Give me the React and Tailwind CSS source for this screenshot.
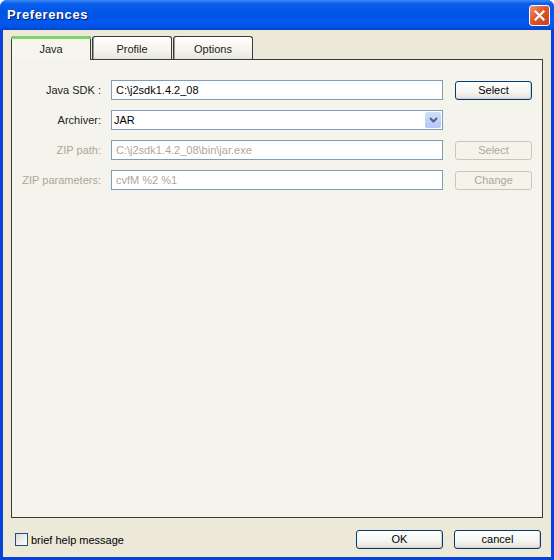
import { useState } from 'react';

const FONT = { fontFamily: '"Liberation Sans", Arial, sans-serif' };

const XpButton = ({ children, disabled, className = '' }) => (
    <button
        disabled={disabled}
        className={`h-[19px] rounded-[3px] border text-[11px] leading-none ${
            disabled
                ? 'border-[#c9c7ba] bg-[#f5f4ea] text-[#aca899]'
                : 'border-[#003c74] bg-[linear-gradient(#ffffff,#f4f4f0_60%,#e3e1d8)] text-black shadow-[inset_-1px_-1px_0_#d6d0c5]'
        } ${className}`}
    >
        {children}
    </button>
);

const Tab = ({ label, active }) => (
    <div
        className={`relative flex h-[23px] w-[80px] items-center justify-center rounded-t-[3px] border border-b-0 text-[11px] ${
            active
                ? 'z-10 -mb-px h-[24px] border-[#3a3a3a] bg-[#f6f5ee] text-[#222]'
                : 'border-[#3a3a3a] bg-[linear-gradient(#ffffff,#f2f1ea_70%,#e6e5dc)] text-[#222] shadow-[inset_1px_0_0_#9a9a9a]'
        }`}
    >
        {active && <div className="absolute -top-px -left-px -right-px h-[3px] rounded-t-[3px] bg-[#7ed36b]" />}
        <span className={active ? 'pt-[1px]' : 'pt-[2px]'}>{label}</span>
    </div>
);

const Field = ({ value, disabled }) => (
    <div
        className={`flex h-[20px] w-[332px] items-center border border-[#7f9db9] bg-white pl-[4px] text-[11px] ${
            disabled ? 'text-[#aca899]' : 'text-black'
        }`}
    >
        {value}
    </div>
);

export default function App() {
    const [brief, setBrief] = useState(false);

    return (
        <div style={FONT} className="flex h-[560px] w-[554px] flex-col rounded-t-[7px] bg-[#0842d8] px-[3px] pb-[3px]">
            {/* title bar */}
            <div className="-mx-[3px] flex h-[30px] items-center justify-between rounded-t-[7px] bg-[linear-gradient(#3b8cf5,#0a5eeb_12%,#0054e3_45%,#0058ee_80%,#0045d0)] pl-[7px] pr-[4px]">
                <span className="text-[13px] font-bold tracking-[0.6px] text-white [text-shadow:1px_1px_0_#0a1a6a]">
                    Preferences
                </span>
                <div className="flex h-[21px] w-[21px] items-center justify-center rounded-[3px] border border-white bg-[linear-gradient(135deg,#e8977a,#e0552b_45%,#c7401c)]">
                    <svg width="11" height="11" viewBox="0 0 11 11">
                        <path d="M1.5 1.5 L9.5 9.5 M9.5 1.5 L1.5 9.5" stroke="#fff" strokeWidth="2.2" strokeLinecap="square" />
                    </svg>
                </div>
            </div>

            {/* body */}
            <div className="flex flex-1 flex-col bg-[#ece9d8] px-[8px] pt-[6px]">
                <div className="flex items-end gap-[1px]">
                    <Tab label="Java" active />
                    <Tab label="Profile" />
                    <Tab label="Options" />
                </div>

                <div className="h-[459px] border border-[#3a3a3a] bg-[#f5f4ec] pt-[20px]">
                    <div className="grid grid-cols-[87px_332px_77px] items-center gap-x-[12px] gap-y-[10px]">
                        <span className="-mr-[2px] text-right text-[11px] text-[#222]">Java SDK :</span>
                        <Field value="C:\j2sdk1.4.2_08" />
                        <XpButton>Select</XpButton>

                        <span className="-mr-[2px] text-right text-[11px] text-[#222]">Archiver:</span>
                        <div className="flex h-[20px] w-[332px] items-center justify-between border border-[#7f9db9] bg-white pl-[2px] pr-[1px] text-[11px] text-black">
                            <span>JAR</span>
                            <div className="flex h-[16px] w-[16px] items-center justify-center rounded-[2px] bg-[linear-gradient(#d2def9,#b3c8f7)]">
                                <svg width="9" height="6" viewBox="0 0 9 6">
                                    <path d="M1 1 L4.5 4.5 L8 1" fill="none" stroke="#4d6185" strokeWidth="2" />
                                </svg>
                            </div>
                        </div>
                        <span />

                        <span className="-mr-[2px] text-right text-[11px] text-[#aca899]">ZIP path:</span>
                        <Field value="C:\j2sdk1.4.2_08\bin\jar.exe" disabled />
                        <XpButton disabled>Select</XpButton>

                        <span className="-mr-[2px] text-right text-[11px] text-[#aca899]">ZIP parameters:</span>
                        <Field value="cvfM %2 %1" disabled />
                        <XpButton disabled>Change</XpButton>
                    </div>
                </div>

                {/* footer */}
                <div className="flex flex-1 items-center justify-between pl-[4px] pr-[2px] pt-[3px]">
                    <label className="flex items-center gap-[3px] text-[11px] text-black">
                        <span
                            onClick={() => setBrief(!brief)}
                            className="h-[13px] w-[13px] border border-[#1c5180] bg-[linear-gradient(135deg,#dcdcd7,#ffffff)]"
                        />
                        <span className="pt-[2px]">brief help message</span>
                    </label>
                    <div className="flex gap-[11px]">
                        <XpButton className="w-[87px]">OK</XpButton>
                        <XpButton className="w-[87px]">cancel</XpButton>
                    </div>
                </div>
            </div>
        </div>
    );
}
